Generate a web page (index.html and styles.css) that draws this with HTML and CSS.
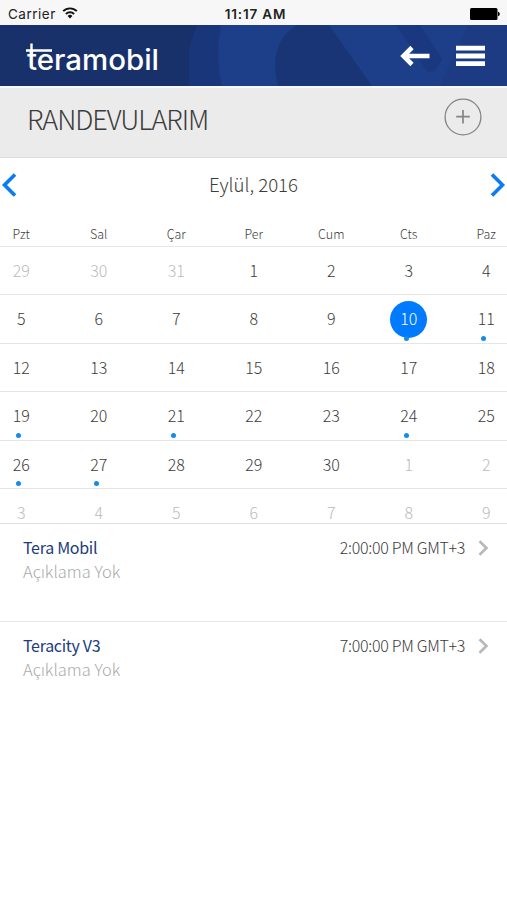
FILE: index.html
```html
<!DOCTYPE html>
<html lang="tr">
<head>
<meta charset="utf-8">
<meta name="viewport" content="width=device-width, initial-scale=1">
<title>Randevularım</title>
<link rel="stylesheet" href="styles.css">
</head>
<body>
<div class="status">
  <div class="carrier"><span>Carrier</span>
    <svg class="wifi" width="16" height="12" viewBox="0 0 16 12"><g fill="none" stroke="#111" stroke-width="1.9"><path d="M1.2 4.2a9.6 9.6 0 0 1 13.6 0"/><path d="M3.9 7a5.8 5.8 0 0 1 8.2 0"/></g><path d="M8 11.4L5.6 9a3.4 3.4 0 0 1 4.8 0z" fill="#111"/></svg>
  </div>
  <div class="clock">11:17 AM</div>
  <svg class="battery" width="30" height="12" viewBox="0 0 30 12"><rect x="0" y="0" width="27.5" height="12" rx="1.5"/><path d="M28 3.8q1.8.4 1.8 2.2t-1.8 2.2z"/></svg>
</div>
<header class="bar">
  <svg class="art" width="507" height="61" viewBox="0 0 507 61">
    <path d="M197 0L189 23V61H507V0z" fill="#1a367b"/>
    <path d="M221 0Q215 31 222 61H507V0z" fill="#1d3e88"/>
    <path d="M298 0C277 10 271 34 278 61H372L329 0z" fill="#1a3575"/>
    <path d="M396 0L427 46Q434 51 442 34L420 0z" fill="#1a3880"/>
    <path d="M468 0L440 61H507V0z" fill="#1c3b83"/>
  </svg>
  <svg class="logo" width="140" height="44" viewBox="0 0 140 44">
    <text x="2" y="29" textLength="132" lengthAdjust="spacingAndGlyphs">teramobil</text>
    <path d="M1 9.500H27M6.500 2.500V14" fill="none" stroke="#fff" stroke-width="2.400"/>
  </svg>
  <div class="actions">
    <svg width="30" height="22" viewBox="0 0 30 22"><path d="M29.5 11H4M12 2.5L3.5 11l8.500 8.500" fill="none" stroke="#fff" stroke-width="4.600"/></svg>
    <svg width="29" height="22" viewBox="0 0 29 22"><path d="M0 3.200H29M0 11H29M0 18.700H29" stroke="#fff" stroke-width="4.800"/></svg>
  </div>
</header>
<section class="heading">
  <h1>RANDEVULARIM</h1>
  <svg width="38" height="38" viewBox="0 0 38 38"><g fill="none" stroke="#858585"><circle cx="19" cy="19" r="17.900" stroke-width="1.300"/><path d="M12.200 18.700H25.800M19 11.900V25.500" stroke-width="1.700"/></g></svg>
</section>
<nav class="month">
  <svg width="16" height="24" viewBox="0 0 16 24"><path d="M14 1.500L3.500 12 14 22.500" fill="none" stroke="#087bf5" stroke-width="3.600"/></svg>
  <span>Eylül, 2016</span>
  <svg width="16" height="24" viewBox="0 0 16 24"><path d="M2 1.500L12.500 12 2 22.500" fill="none" stroke="#087bf5" stroke-width="3.600"/></svg>
</nav>
<div class="calendar">
  <div class="row names"><b>Pzt</b><b>Sal</b><b>Çar</b><b>Per</b><b>Cum</b><b>Cts</b><b>Paz</b></div>
  <div class="row"><i class="out">29</i><i class="out">30</i><i class="out">31</i><i>1</i><i>2</i><i>3</i><i>4</i></div>
  <div class="row"><i>5</i><i>6</i><i>7</i><i>8</i><i>9</i><i class="picked event">10</i><i class="event">11</i></div>
  <div class="row"><i>12</i><i>13</i><i>14</i><i>15</i><i>16</i><i>17</i><i>18</i></div>
  <div class="row"><i class="event">19</i><i>20</i><i class="event">21</i><i>22</i><i>23</i><i class="event">24</i><i>25</i></div>
  <div class="row"><i class="event">26</i><i class="event">27</i><i>28</i><i>29</i><i>30</i><i class="out">1</i><i class="out">2</i></div>
  <div class="row"><i class="out">3</i><i class="out">4</i><i class="out">5</i><i class="out">6</i><i class="out">7</i><i class="out">8</i><i class="out">9</i></div>
</div>
<main>
  <article>
    <div class="info"><h2>Tera Mobil</h2><p>Açıklama Yok</p></div>
    <div class="time"><span>2:00:00 PM GMT+3</span><svg width="11" height="16" viewBox="0 0 11 16"><path d="M1.500 1.200L8.500 8l-7 6.800" fill="none" stroke="#b8b8b8" stroke-width="2.600"/></svg></div>
  </article>
  <article>
    <div class="info"><h2>Teracity V3</h2><p>Açıklama Yok</p></div>
    <div class="time"><span>7:00:00 PM GMT+3</span><svg width="11" height="16" viewBox="0 0 11 16"><path d="M1.500 1.200L8.500 8l-7 6.800" fill="none" stroke="#b8b8b8" stroke-width="2.600"/></svg></div>
  </article>
</main>
</body>
</html>
```
FILE: styles.css
```css
* { box-sizing: border-box; }
body { margin: 0; height: 900px; overflow: hidden; background: #fff; color: #3c3c3c; font-family: "Noto Sans CJK SC", "Noto Sans", sans-serif; }
svg { display: block; flex: none; }
h1, h2, p { margin: 0; }

.status { display: grid; grid-template-columns: 1fr auto 1fr; align-items: center; height: 25px; padding: 2px 7px 0 8px; background: #f7f7f7; font: 13.500px/20px Inter, sans-serif; color: #222; }
.carrier { display: flex; align-items: center; gap: 7px; letter-spacing: 0.500px; }
.wifi { margin: -2px 0 0 -1px; }
.clock { padding-left: 3px; font-weight: 600; letter-spacing: 0.800px; }
.battery { justify-self: end; }

.bar { position: relative; display: flex; justify-content: space-between; align-items: flex-start; height: 61px; background: #18316b; }
.art { position: absolute; inset: 0; }
.logo { position: relative; margin: 16px 0 0 25px; }
.logo text { font: 500 28px Inter, sans-serif; fill: #fff; }
.actions { position: relative; display: flex; gap: 26px; padding: 20px 22px 0 0; }

.heading { display: flex; justify-content: space-between; height: 72px; padding: 11px 25px 0 27px; background: #ebebeb; border-top: 2px solid #f8f8fa; border-bottom: 1px solid #dedede; }
.heading h1 { font-size: 27px; line-height: 40px; font-weight: 300; letter-spacing: -1.050px; }
.heading svg { margin-top: -1px; }

.month { display: flex; justify-content: space-between; align-items: center; height: 54px; padding: 0 1px; font-size: 18.600px; font-weight: 300; }
.month span { padding-bottom: 3px; }

.calendar { height: 312px; overflow: hidden; border-bottom: 1px solid #e2e2e2; }
.row { display: grid; grid-template-columns: repeat(7, 77.500px); height: 48.500px; margin: 0 -17.500px; border-bottom: 1px solid #e6e6e6; text-align: center; }
.row b, .row i { font-style: normal; font-weight: 300; }
.row.names { height: 34.600px; font-size: 12.500px; line-height: 44px; }
.row i { position: relative; font-size: 16px; line-height: 46px; }
.row .out { color: #bbb; }
.row .picked { justify-self: center; align-self: center; width: 37px; height: 37px; margin-top: 1px; line-height: 35px; border-radius: 50%; background: #007aff; color: #fff; }
.event::after { content: ""; position: absolute; left: 33.500px; bottom: 2px; width: 5px; height: 5px; border-radius: 50%; background: #158be6; }
.picked.event::after { left: 13.500px; bottom: -3px; }

article { display: flex; justify-content: space-between; height: 98px; padding: 11px 18px 0 23px; border-bottom: 1px solid #e6e6e6; font-size: 16.500px; line-height: 24px; }
article:last-child { border: 0; }
h2 { font-size: 16px; font-weight: 400; letter-spacing: -0.300px; color: #223b80; }
p { font-weight: 300; color: #aaa; }
.time { display: flex; gap: 13px; height: 24px; align-items: center; font-size: 16px; font-weight: 300; letter-spacing: -0.300px; }
.time span { margin-top: -1px; }
.time svg { margin-top: 1px; }
```
